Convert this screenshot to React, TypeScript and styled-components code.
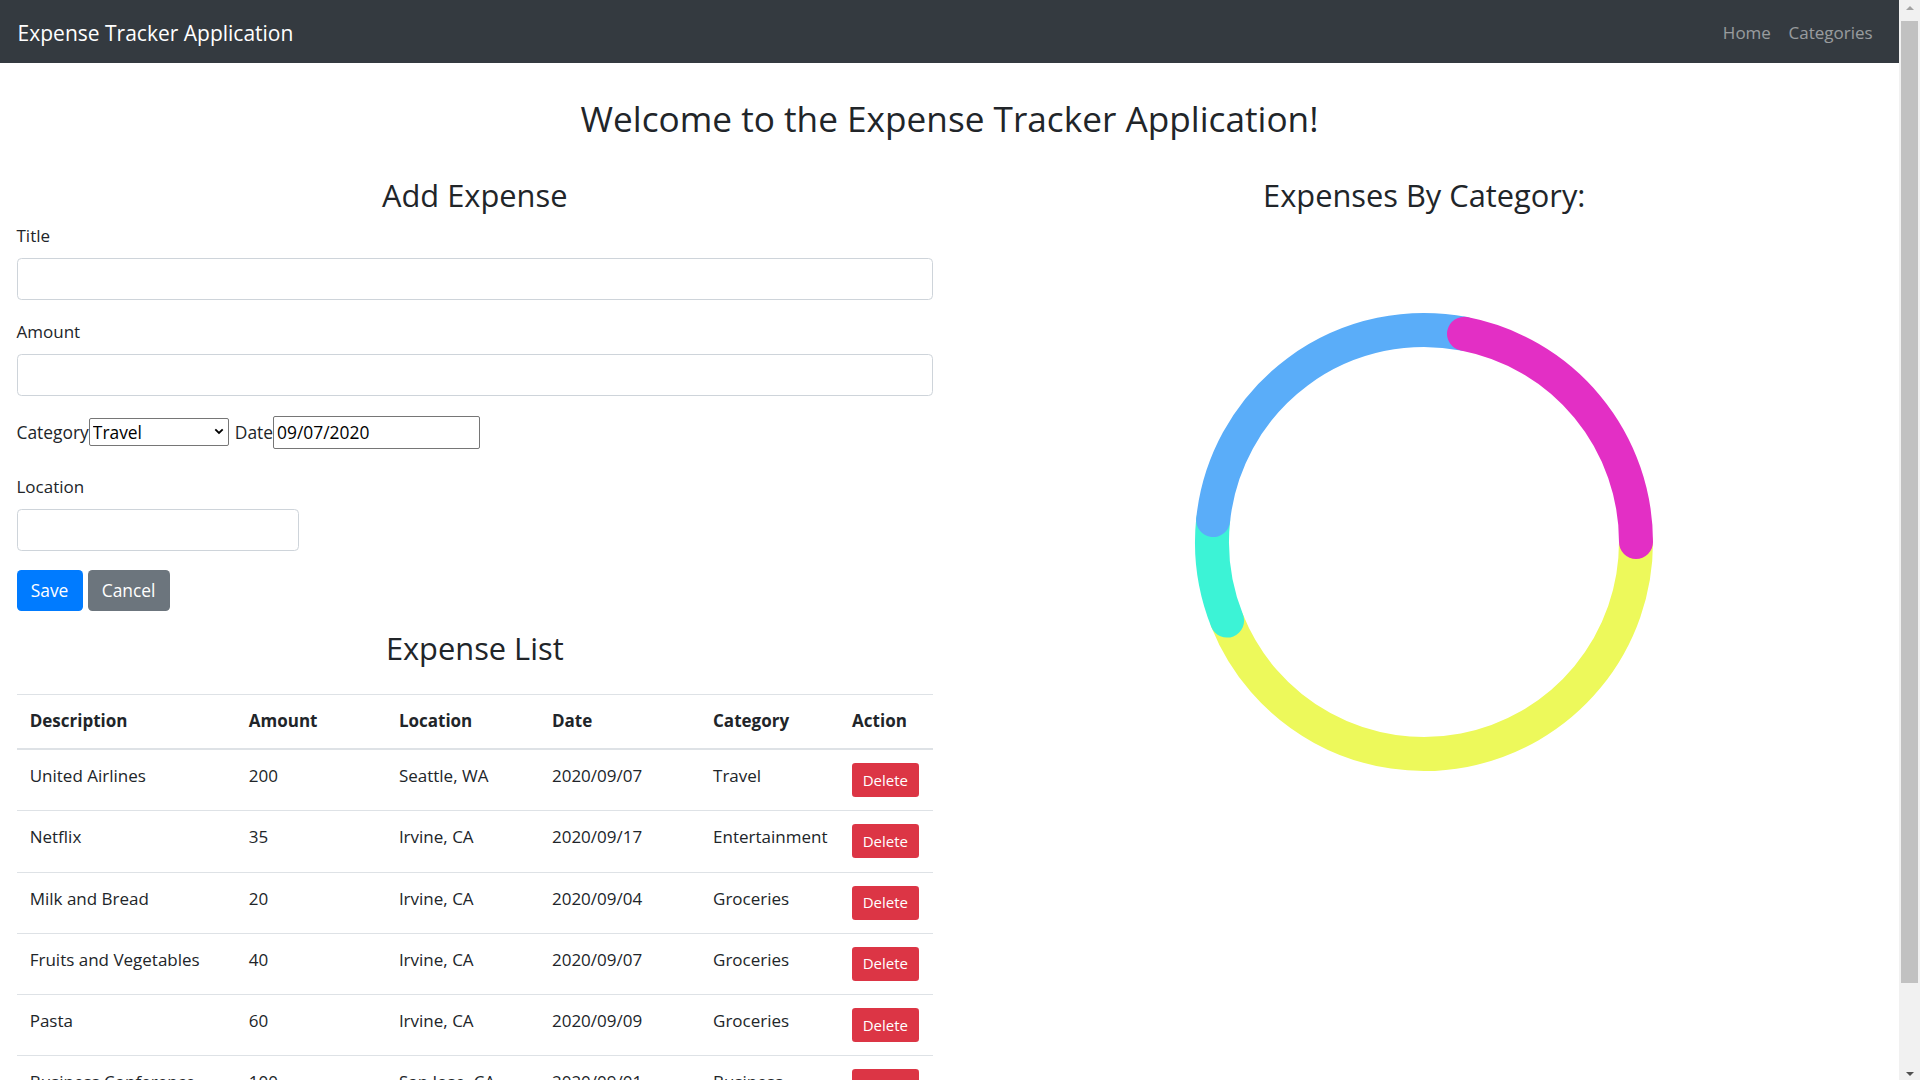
import React from "react";
import styled, { createGlobalStyle } from "styled-components";

const GlobalStyle = createGlobalStyle`
  html, body {
    margin: 0;
    padding: 0;
  }
  body {
    font-family: "Open Sans", "Noto Sans", sans-serif;
    font-size: 17px;
    line-height: 26.4px;
    color: #212529;
    background: #fff;
  }
  *, *::before, *::after {
    box-sizing: border-box;
  }
`;

type Expense = {
  description: string;
  amount: number;
  location: string;
  date: string;
  category: string;
};

const expenses: Expense[] = [
  { description: "United Airlines", amount: 200, location: "Seattle, WA", date: "2020/09/07", category: "Travel" },
  { description: "Netflix", amount: 35, location: "Irvine, CA", date: "2020/09/17", category: "Entertainment" },
  { description: "Milk and Bread", amount: 20, location: "Irvine, CA", date: "2020/09/04", category: "Groceries" },
  { description: "Fruits and Vegetables", amount: 40, location: "Irvine, CA", date: "2020/09/07", category: "Groceries" },
  { description: "Pasta", amount: 60, location: "Irvine, CA", date: "2020/09/09", category: "Groceries" },
  { description: "Business Conference", amount: 100, location: "San Jose, CA", date: "2020/09/01", category: "Business" },
];

const categoryColors: Record<string, string> = {
  Travel: "#edf95b",
  Entertainment: "#3cf3d6",
  Groceries: "#5aadf9",
  Business: "#e32fc5",
};

// window chrome: the page plus the browser's classic scrollbar on the right
const Shell = styled.div`
  display: flex;
  align-items: flex-start;
`;

const Page = styled.div`
  flex: 1;
  min-width: 0;
`;

const ScrollTrack = styled.div`
  position: sticky;
  top: 0;
  flex: 0 0 21px;
  height: 100vh;
  display: flex;
  flex-direction: column;
  align-items: center;
  background: #f1f1f1;
`;

const ScrollArrow = styled.div<{ $down?: boolean }>`
  flex: 0 0 21px;
  display: flex;
  align-items: center;
  justify-content: center;
  &::after {
    content: "";
    width: 0;
    height: 0;
    border-left: 4px solid transparent;
    border-right: 4px solid transparent;
    ${(p) =>
      p.$down
        ? "border-top: 4px solid #505050; margin-top: 8px;"
        : "border-bottom: 4px solid #a3a3a3; margin-bottom: 6px;"}
  }
`;

const ScrollThumb = styled.div`
  width: 17px;
  height: 962px;
  background: #c1c1c1;
`;

const ScrollRest = styled.div`
  flex: 1;
`;

const Navbar = styled.nav`
  display: flex;
  align-items: center;
  justify-content: space-between;
  background-color: #343a40;
  padding: 9.3px 17.6px;
`;

const Brand = styled.span`
  color: #fff;
  font-size: 21px;
  line-height: 33px;
  padding: 7.5px 0 3.5px;
`;

const NavLinks = styled.div`
  display: flex;
`;

const NavLink = styled.a`
  color: rgba(255, 255, 255, 0.5);
  padding: 10.3px 8.8px 7.3px;
  text-decoration: none;
`;

const Main = styled.main`
  padding-top: 34px;
  padding-bottom: 34px;
`;

const PageTitle = styled.h2`
  margin: 0 0 38px;
  font-size: 35.2px;
  font-weight: 500;
  line-height: 1.2;
  text-align: center;
`;

const Columns = styled.div`
  display: grid;
  grid-template-columns: 1fr 1fr;
`;

const Column = styled.section`
  padding: 0 16.5px;
`;

const SectionTitle = styled.h3<{ $gap?: number }>`
  margin: 0 0 ${(p) => p.$gap ?? 8.8}px;
  font-size: 30.8px;
  font-weight: 500;
  line-height: 1.2;
  text-align: center;
`;

const FormGroup = styled.div<{ $gap?: number }>`
  margin-bottom: ${(p) => p.$gap ?? 17.6}px;
`;

const Label = styled.label`
  display: block;
  margin-bottom: 8.8px;
`;

const TextInput = styled.input<{ $width?: number }>`
  display: block;
  width: ${(p) => (p.$width ? `${p.$width}px` : "100%")};
  height: 41.8px;
  padding: 6.6px 13.2px;
  font: inherit;
  color: #495057;
  background: #fff;
  border: 1px solid #ced4da;
  border-radius: 4.4px;
`;

const InlineRow = styled.div`
  display: flex;
  align-items: center;
  height: 37px;
  margin-bottom: 24px;
  padding-top: 1.6px;
  font-size: 17.4px;
`;

const InlineLabel = styled.label``;

const SelectWrap = styled.span`
  position: relative;
  display: inline-block;
  margin-right: 6px;
`;

const Select = styled.select`
  appearance: none;
  width: 140px;
  height: 28px;
  padding: 0 22px 0 3px;
  font: inherit;
  line-height: 26px;
  color: #000;
  background: #fff;
  border: 1px solid #767676;
  border-radius: 2px;
`;

const SelectArrow = styled.svg`
  position: absolute;
  right: 5px;
  top: 10px;
  pointer-events: none;
`;

const DateInput = styled.input`
  width: 207px;
  height: 33px;
  padding: 0 3px;
  font: inherit;
  color: #000;
  border: 1px solid #767676;
  border-radius: 2px;
`;

const Button = styled.button<{ $variant: "primary" | "secondary" | "danger"; $small?: boolean }>`
  display: inline-block;
  font-family: inherit;
  font-size: ${(p) => (p.$small ? "15px" : "17.4px")};
  line-height: ${(p) => (p.$small ? "23.1px" : "26.4px")};
  padding: ${(p) => (p.$small ? "4.4px 9.6px" : "6.6px 13.2px")};
  border: 1px solid transparent;
  border-radius: ${(p) => (p.$small ? "3.3px" : "4.4px")};
  color: #fff;
  cursor: pointer;
  background-color: ${(p) =>
    p.$variant === "primary" ? "#007bff" : p.$variant === "secondary" ? "#6c757d" : "#dc3545"};
  & + & {
    margin-left: 5px;
  }
`;

const ButtonRow = styled.div`
  display: flex;
  margin-bottom: 19px;
`;

const Table = styled.table`
  width: 100%;
  border-collapse: collapse;
  table-layout: fixed;
  margin-bottom: 17.6px;
`;

const HeadCell = styled.th<{ $width: number }>`
  width: ${(p) => p.$width}px;
  padding: 13.2px;
  text-align: left;
  font-weight: 700;
  vertical-align: bottom;
  border-top: 1px solid #dee2e6;
  border-bottom: 2px solid #dee2e6;
`;

const Cell = styled.td`
  padding: 13.2px;
  vertical-align: top;
  border-top: 1px solid #dee2e6;
  white-space: nowrap;
`;

const ChartBox = styled.div`
  display: flex;
  justify-content: center;
  margin-top: 88px;
`;

const columns: { label: string; width: number }[] = [
  { label: "Description", width: 219 },
  { label: "Amount", width: 150 },
  { label: "Location", width: 153 },
  { label: "Date", width: 161 },
  { label: "Category", width: 139 },
  { label: "Action", width: 94 },
];

function DonutChart({ data }: { data: Expense[] }) {
  const totals: { name: string; value: number }[] = [];
  data.forEach((e) => {
    const found = totals.find((t) => t.name === e.category);
    if (found) found.value += e.amount;
    else totals.push({ name: e.category, value: e.amount });
  });
  const sum = totals.reduce((s, t) => s + t.value, 0);
  const size = 480;
  const c = size / 2;
  const r = 212;
  const point = (deg: number) => {
    const rad = (deg * Math.PI) / 180;
    return [c + r * Math.sin(rad), c - r * Math.cos(rad)];
  };
  let start = 90;
  const arcs = totals.map((t) => {
    const sweep = (t.value / sum) * 360;
    const [x1, y1] = point(start);
    const [x2, y2] = point(start + sweep);
    const large = sweep > 180 ? 1 : 0;
    const d = `M ${x1} ${y1} A ${r} ${r} 0 ${large} 1 ${x2} ${y2}`;
    start += sweep;
    return { d, color: categoryColors[t.name], name: t.name };
  });
  return (
    <svg width={size} height={size} viewBox={`0 0 ${size} ${size}`}>
      {arcs.map((a) => (
        <path key={a.name} d={a.d} fill="none" stroke={a.color} strokeWidth={34} strokeLinecap="round" />
      ))}
    </svg>
  );
}

export default function App() {
  return (
    <>
      <GlobalStyle />
      <Shell>
        <Page>
          <Navbar>
            <Brand>Expense Tracker Application</Brand>
            <NavLinks>
              <NavLink href="#">Home</NavLink>
              <NavLink href="#">Categories</NavLink>
            </NavLinks>
          </Navbar>
          <Main>
            <PageTitle>Welcome to the Expense Tracker Application!</PageTitle>
            <Columns>
              <Column>
                <SectionTitle>Add Expense</SectionTitle>
                <FormGroup $gap={19}>
                  <Label htmlFor="title">Title</Label>
                  <TextInput id="title" type="text" />
                </FormGroup>
                <FormGroup>
                  <Label htmlFor="amount">Amount</Label>
                  <TextInput id="amount" type="text" />
                </FormGroup>
                <InlineRow>
                  <InlineLabel htmlFor="category">Category</InlineLabel>
                  <SelectWrap>
                    <Select id="category" defaultValue="Travel">
                      <option>Travel</option>
                      <option>Entertainment</option>
                      <option>Groceries</option>
                      <option>Business</option>
                    </Select>
                    <SelectArrow width="10" height="7" viewBox="0 0 10 7">
                      <path d="M1.3 1.3 L5 5 L8.7 1.3" fill="none" stroke="#000" strokeWidth="1.8" />
                    </SelectArrow>
                  </SelectWrap>
                  <InlineLabel htmlFor="date">Date</InlineLabel>
                  <DateInput id="date" type="text" defaultValue="09/07/2020" />
                </InlineRow>
                <FormGroup $gap={18.5}>
                  <Label htmlFor="location">Location</Label>
                  <TextInput id="location" type="text" $width={282} />
                </FormGroup>
                <ButtonRow>
                  <Button $variant="primary" type="submit">Save</Button>
                  <Button $variant="secondary" type="button">Cancel</Button>
                </ButtonRow>
                <SectionTitle $gap={27}>Expense List</SectionTitle>
                <Table>
                  <thead>
                    <tr>
                      {columns.map((col) => (
                        <HeadCell key={col.label} $width={col.width}>
                          {col.label}
                        </HeadCell>
                      ))}
                    </tr>
                  </thead>
                  <tbody>
                    {expenses.map((e) => (
                      <tr key={e.description}>
                        <Cell>{e.description}</Cell>
                        <Cell>{e.amount}</Cell>
                        <Cell>{e.location}</Cell>
                        <Cell>{e.date}</Cell>
                        <Cell>{e.category}</Cell>
                        <Cell>
                          <Button $variant="danger" $small type="button">Delete</Button>
                        </Cell>
                      </tr>
                    ))}
                  </tbody>
                </Table>
              </Column>
              <Column>
                <SectionTitle>Expenses By Category:</SectionTitle>
                <ChartBox>
                  <DonutChart data={expenses} />
                </ChartBox>
              </Column>
            </Columns>
          </Main>
        </Page>
        <ScrollTrack>
          <ScrollArrow />
          <ScrollThumb />
          <ScrollRest />
          <ScrollArrow $down />
        </ScrollTrack>
      </Shell>
    </>
  );
}
